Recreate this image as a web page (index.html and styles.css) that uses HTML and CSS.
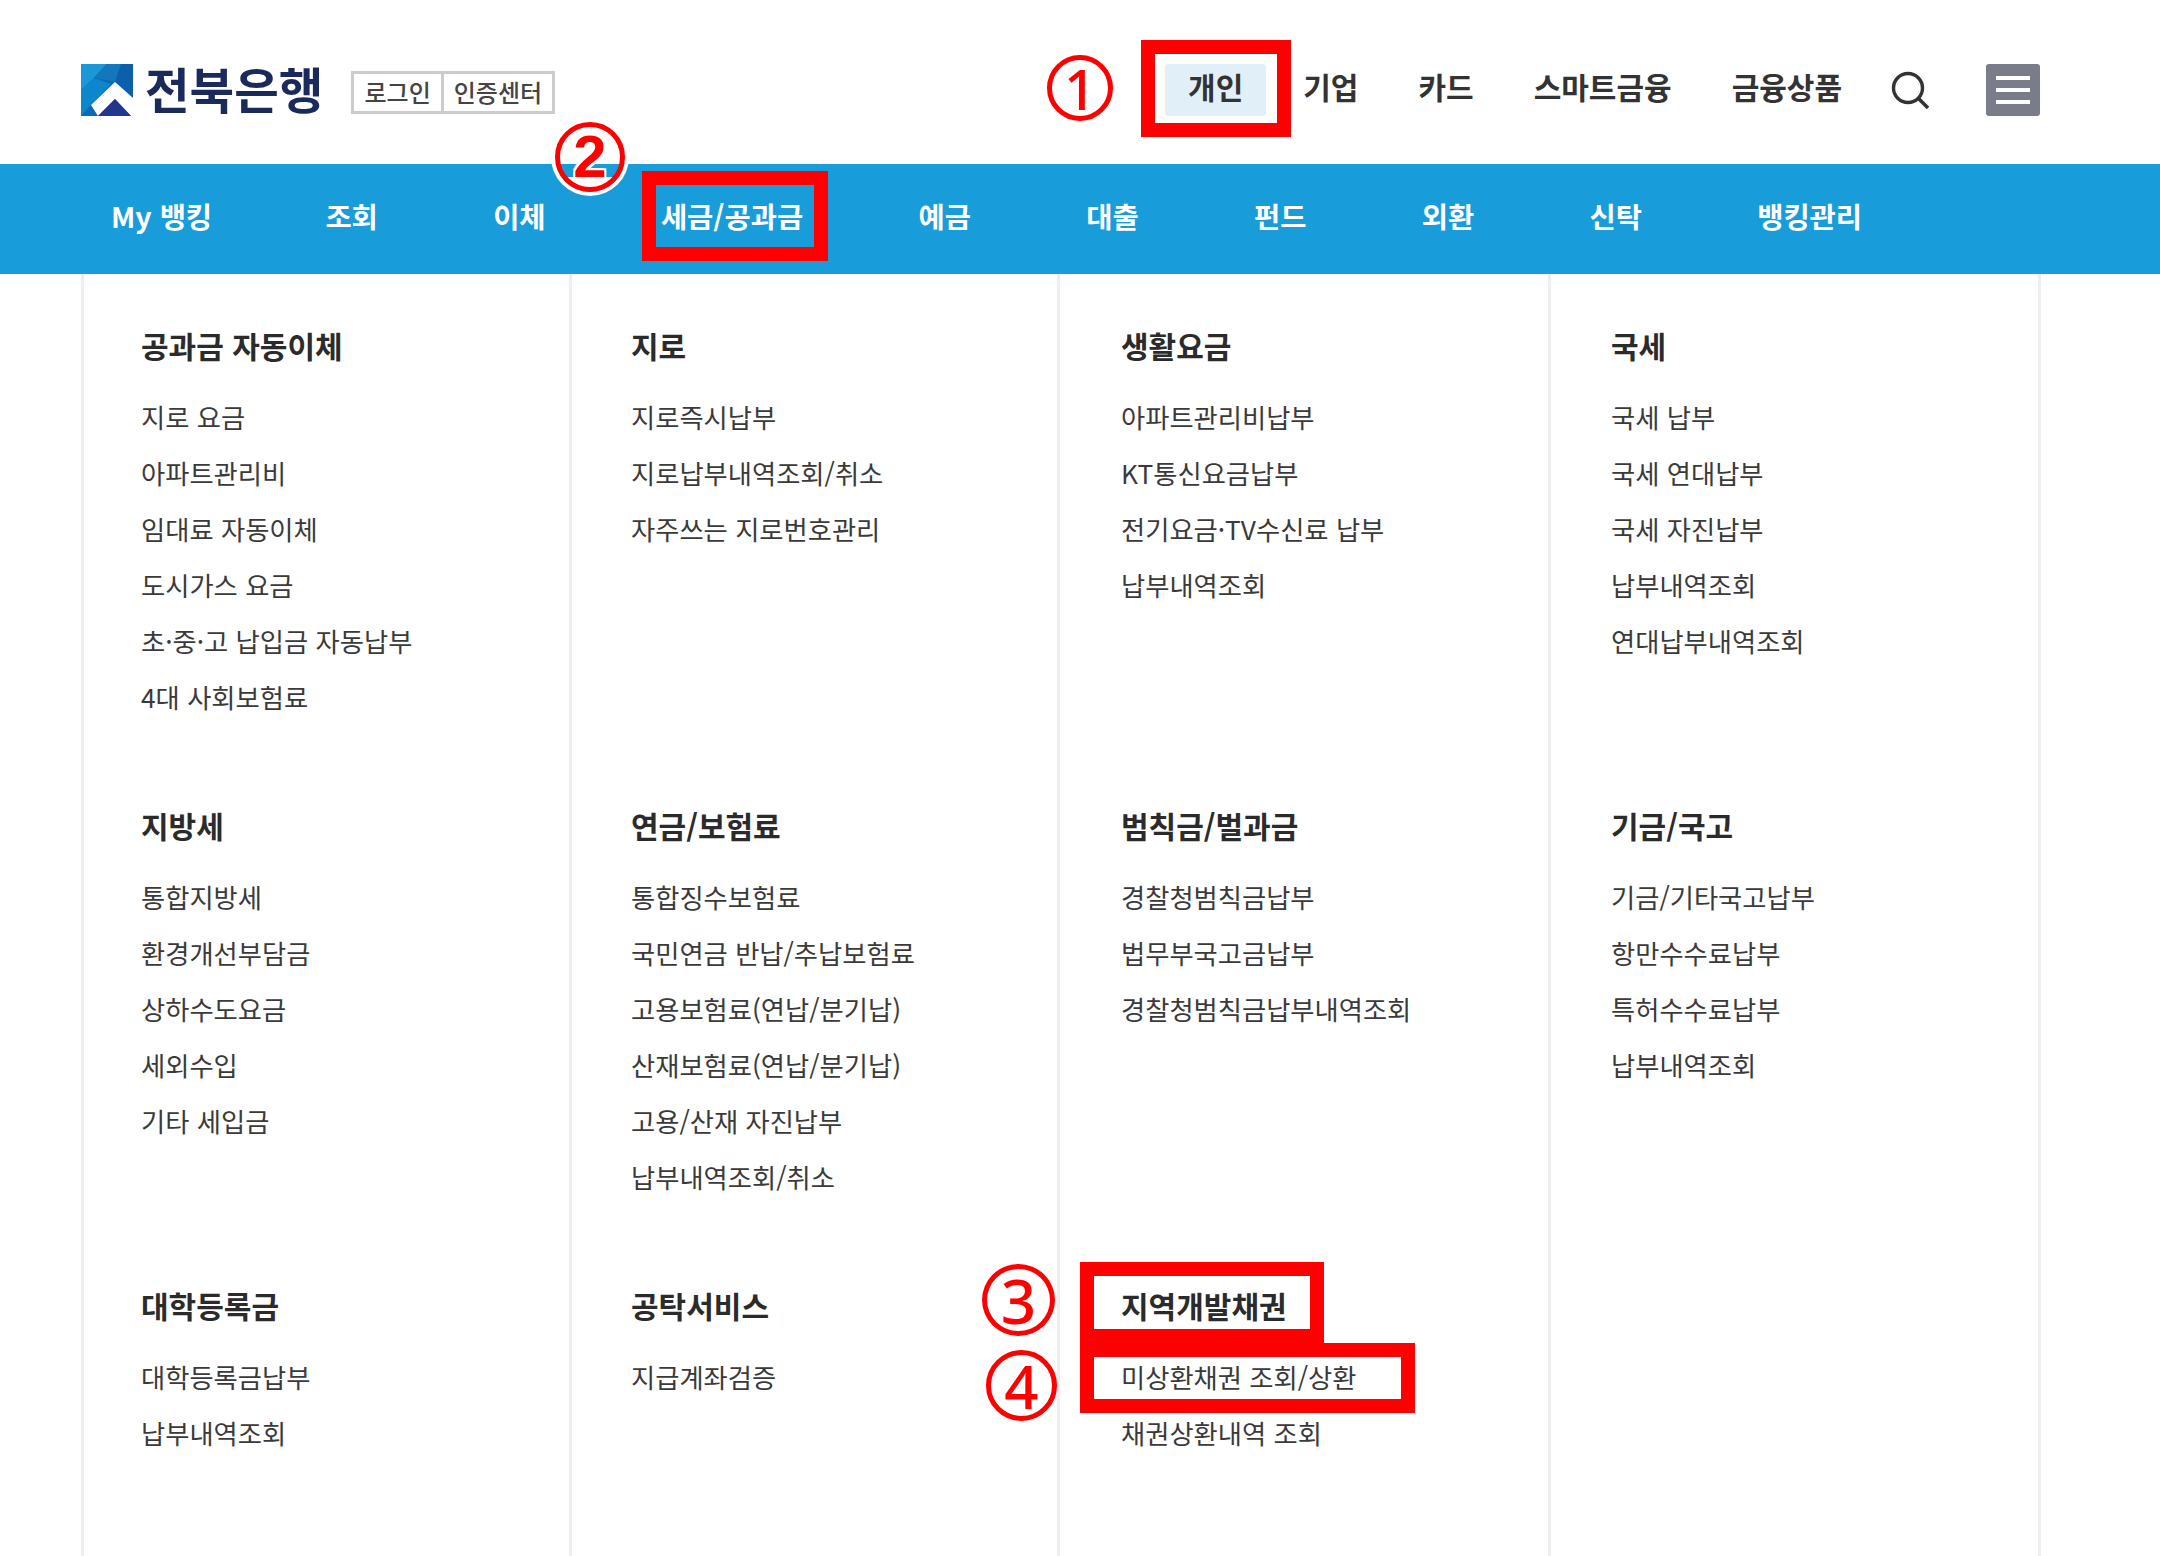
FILE: index.html
```html
<!DOCTYPE html>
<html lang="ko">
<head>
<meta charset="utf-8">
<title>전북은행 메뉴</title>
<link rel="stylesheet" href="styles.css">
</head>
<body>
<header class="top">
  <a class="brand">
    <svg class="brand-mark" viewBox="0 0 52 52" width="52" height="52">
      <rect width="52" height="52" fill="#0a6ab4"/>
      <polygon points="0,0 26,0 13,14 0,26" fill="#1b96d6"/>
      <polygon points="0,26 13,14 30,20 10,41 0,52" fill="#0e86cb"/>
      <polygon points="26,0 52,0 52,34 34,18 13,14" fill="#0b5fab"/>
      <polygon points="26,0 40,0 34,18 13,14" fill="#1277bd"/>
      <polygon points="34,18 52,34 52,52 50,52 34,35 17,52 10,41" fill="#fff"/>
      <polygon points="34,35 50,52 17,52" fill="#21368f"/>
    </svg>
    <span class="brand-name">전북은행</span>
  </a>
  <div class="auth">
    <span class="auth-cell">로그인</span>
    <span class="auth-cell">인증센터</span>
  </div>
  <nav class="top-nav">
    <a class="top-link is-active">개인</a>
    <a class="top-link">기업</a>
    <a class="top-link">카드</a>
    <a class="top-link">스마트금융</a>
    <a class="top-link">금융상품</a>
  </nav>
  <svg class="search" viewBox="0 0 40 40" width="40" height="40">
    <circle cx="17" cy="17" r="14.5" fill="none" stroke="#333" stroke-width="3.4"/>
    <line x1="27.5" y1="27.5" x2="37" y2="37" stroke="#333" stroke-width="3.6"/>
  </svg>
  <div class="burger"><i></i><i></i><i></i></div>
</header>

<nav class="main-nav">
  <a class="nav-first">My 뱅킹</a><a>조회</a><a>이체</a><a>세금/공과금</a><a>예금</a><a>대출</a><a>펀드</a><a>외환</a><a>신탁</a><a>뱅킹관리</a>
</nav>

<main class="menu">
  <div class="col">
    <section class="group"><h3>공과금 자동이체</h3><ul><li>지로 요금</li><li>아파트관리비</li><li>임대료 자동이체</li><li>도시가스 요금</li><li>초·중·고 납입금 자동납부</li><li>4대 사회보험료</li></ul></section>
    <section class="group"><h3>지방세</h3><ul><li>통합지방세</li><li>환경개선부담금</li><li>상하수도요금</li><li>세외수입</li><li>기타 세입금</li></ul></section>
    <section class="group"><h3>대학등록금</h3><ul><li>대학등록금납부</li><li>납부내역조회</li></ul></section>
  </div>
  <div class="col">
    <section class="group"><h3>지로</h3><ul><li>지로즉시납부</li><li>지로납부내역조회/취소</li><li>자주쓰는 지로번호관리</li></ul></section>
    <section class="group"><h3>연금/보험료</h3><ul><li>통합징수보험료</li><li>국민연금 반납/추납보험료</li><li>고용보험료(연납/분기납)</li><li>산재보험료(연납/분기납)</li><li>고용/산재 자진납부</li><li>납부내역조회/취소</li></ul></section>
    <section class="group"><h3>공탁서비스</h3><ul><li>지급계좌검증</li></ul></section>
  </div>
  <div class="col">
    <section class="group"><h3>생활요금</h3><ul><li>아파트관리비납부</li><li>KT통신요금납부</li><li>전기요금·TV수신료 납부</li><li>납부내역조회</li></ul></section>
    <section class="group"><h3>범칙금/벌과금</h3><ul><li>경찰청범칙금납부</li><li>법무부국고금납부</li><li>경찰청범칙금납부내역조회</li></ul></section>
    <section class="group"><h3>지역개발채권</h3><ul><li>미상환채권 조회/상환</li><li>채권상환내역 조회</li></ul></section>
  </div>
  <div class="col col-last">
    <section class="group"><h3>국세</h3><ul><li>국세 납부</li><li>국세 연대납부</li><li>국세 자진납부</li><li>납부내역조회</li><li>연대납부내역조회</li></ul></section>
    <section class="group"><h3>기금/국고</h3><ul><li>기금/기타국고납부</li><li>항만수수료납부</li><li>특허수수료납부</li><li>납부내역조회</li></ul></section>
  </div>
</main>

<div class="mark mark-a"></div>
<div class="mark mark-b"></div>
<div class="mark mark-c"></div>
<div class="mark mark-d"></div>
<span class="num num-1">1</span>
<span class="num num-2">2</span>
<span class="num num-3">3</span>
<span class="num num-4">4</span>
</body>
</html>
```
FILE: styles.css
```css
* { box-sizing: border-box; }
html, body { margin: 0; padding: 0; }
body {
  position: relative;
  width: 2160px;
  height: 1556px;
  overflow: hidden;
  background: #fff;
  color: #333;
  font-family: "Noto Sans CJK KR", "Noto Sans", sans-serif;
}
a { color: inherit; text-decoration: none; }

.top {
  display: flex;
  align-items: center;
  height: 164px;
  padding: 16px 0 0 81px;
}
.brand { display: flex; align-items: center; gap: 12px; }
.brand-mark { display: block; }
.brand-name {
  margin-top: -4px;
  font-size: 48.5px;
  font-weight: 700;
  line-height: 52px;
  color: #1b2a5c;
}
.auth {
  display: flex;
  margin-left: 28px;
  margin-top: 4px;
  height: 43px;
  border: 3px solid #ccc;
}
.auth-cell {
  padding: 0 10px;
  font-size: 24px;
  font-weight: 500;
  line-height: 36px;
  color: #444;
}
.auth-cell + .auth-cell { border-left: 3px solid #ccc; }

.top-nav {
  display: flex;
  align-items: center;
  gap: 14px;
  margin-left: 610px;
}
.top-link {
  padding: 0 23px;
  height: 52px;
  font-size: 30px;
  font-weight: 700;
  line-height: 44px;
  color: #333;
  white-space: nowrap;
}
.is-active { background: #e1f0f8; border-radius: 3px; }
.search { display: block; margin-left: 26px; margin-top: 2px; }
.burger {
  display: flex;
  flex-direction: column;
  justify-content: center;
  gap: 8px;
  width: 54px;
  height: 52px;
  margin-left: 55px;
  padding: 0 10px;
  background: #797d89;
  border-radius: 3px;
}
.burger i { display: block; height: 4px; background: #fff; }

.main-nav {
  display: flex;
  align-items: center;
  gap: 115.3px;
  height: 110px;
  padding: 0 0 8px 111px;
  background: #189cda;
  font-size: 28.5px;
  font-weight: 700;
  color: #fff;
  white-space: nowrap;
}
.nav-first { margin-right: -2px; }

.menu {
  display: flex;
  width: 1960px;
  height: 1282px;
  margin-left: 81px;
  overflow: hidden;
}
.col { border-left: 3px solid #eee; width: 488px; padding-left: 57px; }
.col:nth-child(2) { padding-left: 59px; }
.col:nth-child(3) { width: 491px; padding-left: 61px; }
.col-last { width: 493px; padding-left: 60px; border-right: 3px solid #eee; }
.group { height: 480px; padding-top: 51px; }
.group h3 {
  margin: 0 0 24px;
  font-size: 30px;
  font-weight: 700;
  line-height: 40px;
  color: #2b2b2b;
}
.group ul { margin: 0; padding: 0; list-style: none; }
.group li {
  font-size: 26.3px;
  line-height: 56px;
  color: #3a3a3a;
  white-space: nowrap;
}

/* annotations drawn over the screenshot */
.mark { position: absolute; border: 14px solid #f00; }
.mark-a { left: 1141px; top: 40px; width: 150px; height: 97px; }
.mark-b { left: 642px; top: 171px; width: 186px; height: 90px; }
.mark-c { left: 1080px; top: 1262px; width: 244px; height: 81px; }
.mark-d { left: 1080px; top: 1343px; width: 335px; height: 70px; }

.num {
  position: absolute;
  display: flex;
  align-items: center;
  justify-content: center;
  border: 5px solid #f00;
  border-radius: 50%;
  color: #f00;
  font-family: "Noto Sans", sans-serif;
  font-weight: 500;
  line-height: 1;
}
.num-1 { left: 1047px; top: 55px; width: 66px; height: 66px; font-size: 56px; }
.num-2 {
  left: 555px;
  top: 122px;
  width: 70px;
  height: 70px;
  font-family: "Liberation Sans", sans-serif;
  font-weight: 700;
  font-size: 60px;
  background: linear-gradient(#fff 0 37px, #189cda 37px 50px, #fff 50px);
  box-shadow: 0 0 0 4px #fff;
  text-shadow: 2px 2px 0 #fff, -2px 2px 0 #fff, 2px -2px 0 #fff, -2px -2px 0 #fff;
}
.num-3 { left: 982px; top: 1264px; width: 73px; height: 72px; font-size: 62px; }
.num-4 { left: 986px; top: 1350px; width: 71px; height: 71px; font-size: 60px; }
```
